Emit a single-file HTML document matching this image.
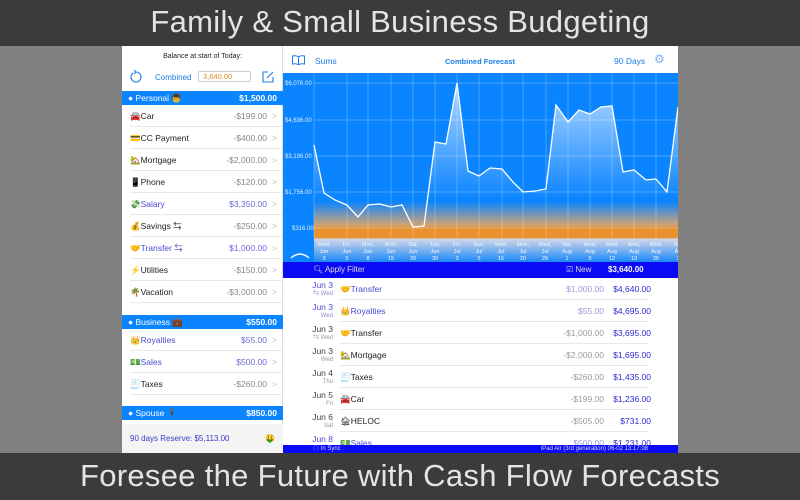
<!DOCTYPE html>
<html><head><meta charset="utf-8"><style>
*{margin:0;padding:0;box-sizing:border-box}
body{width:800px;height:500px;overflow:hidden;background:#808080;font-family:"Liberation Sans","Noto Sans CJK JP",sans-serif;position:relative}
.bar{position:absolute;left:0;width:800px;background:#3b3b3b;color:#e4e4e4;text-align:center;font-weight:300;font-size:31px;letter-spacing:0.3px}
#top{top:0;height:46px;line-height:44px}
#bot{top:453px;height:47px;line-height:46px}
#screen{position:absolute;left:122px;top:46px;width:556px;height:407px;background:#fff;overflow:hidden}
#left{position:absolute;left:0;top:0;width:161px;height:407px;background:#fff;border-right:1px solid #ddd}
.hd{font-size:7px;color:#222;text-align:center;position:absolute;top:7px;width:161px}
.sec{position:absolute;left:0;width:161px;height:14px;background:#0a84ff;color:#fff;font-size:8.5px;line-height:14px;padding:0 6px}
.sec b{float:right;font-weight:bold}
.row{position:absolute;left:8px;width:153px;height:22px;border-bottom:1px solid #e8e8e8;font-size:8.5px;line-height:22px;color:#222}
.row .v{position:absolute;right:16px;color:#888}
.row .c{position:absolute;right:6px;color:#bbb}
.row.p{color:#4a4ad6}.row.p .v{color:#6a6ad6}
#right{position:absolute;left:161px;top:0;width:395px;height:407px}
.tx{position:absolute;left:18px;width:377px;height:22px;font-size:8.5px}
.tx .d{position:absolute;left:6px;top:3px;width:26px;text-align:right;color:#444;line-height:9px}
.tx .d small{display:block;font-size:6px;color:#999}
.tx .n{position:absolute;left:39px;top:0;line-height:22px;color:#222;width:308px;border-bottom:1px solid #e8e8e8;height:22px}
.tx .bb{position:absolute;left:300px;line-height:22px;color:#2b2bd0;top:0;width:50px;text-align:right}
.tx .am{left:253px;color:#999}
.pp .d,.pp .n{color:#4a4ad6}.pp .d small{color:#8a8ad6}.pp .am{color:#9a9ae0}
</style></head><body>
<div class="bar" id="top">Family &amp; Small Business Budgeting</div>
<div class="bar" id="bot">Foresee the Future with Cash Flow Forecasts</div>
<div id="screen">
<div id="left">
<div class="hd">Balance at start of Today:</div>
<svg style="position:absolute;left:8px;top:24px" width="12" height="13" viewBox="0 0 12 13"><path d="M3 3 A5 5 0 1 0 6 2 L4 0 M6 2 L4 4" fill="none" stroke="#1a7de8" stroke-width="1.1"/></svg>
<div style="position:absolute;left:33px;top:27px;font-size:8px;color:#1a7de8">Combined</div>
<div style="position:absolute;left:76px;top:25px;width:53px;height:11px;border:1px solid #ccc;border-radius:2px;font-size:7.5px;color:#e08a2a;line-height:10px;padding-left:4px">3,640.00</div>
<svg style="position:absolute;left:140px;top:25px" width="12" height="12" viewBox="0 0 12 12"><path d="M6 1H1v10h10V6M5 7l6-6" fill="none" stroke="#1a7de8" stroke-width="1.1"/></svg>
<div class="sec" style="top:45px">● Personal 👦<b>$1,500.00</b></div>
<div class="row" style="top:59px">🚘Car<span class="v">-$199.00</span><span class="c">&gt;</span></div>
<div class="row" style="top:81px">💳CC Payment<span class="v">-$400.00</span><span class="c">&gt;</span></div>
<div class="row" style="top:103px">🏡Mortgage<span class="v">-$2,000.00</span><span class="c">&gt;</span></div>
<div class="row" style="top:125px">📱Phone<span class="v">-$120.00</span><span class="c">&gt;</span></div>
<div class="row p" style="top:147px">💸Salary<span class="v">$3,350.00</span><span class="c">&gt;</span></div>
<div class="row" style="top:169px">💰Savings ⇆<span class="v">-$250.00</span><span class="c">&gt;</span></div>
<div class="row p" style="top:191px">🤝Transfer ⇆<span class="v">$1,000.00</span><span class="c">&gt;</span></div>
<div class="row" style="top:213px">⚡Utilities<span class="v">-$150.00</span><span class="c">&gt;</span></div>
<div class="row" style="top:235px">🌴Vacation<span class="v">-$3,000.00</span><span class="c">&gt;</span></div>
<div class="sec" style="top:269px">● Business 💼<b>$550.00</b></div>
<div class="row p" style="top:283px">👑Royalties<span class="v">$55.00</span><span class="c">&gt;</span></div>
<div class="row p" style="top:305px">💵Sales<span class="v">$500.00</span><span class="c">&gt;</span></div>
<div class="row" style="top:327px">🧾Taxes<span class="v">-$260.00</span><span class="c">&gt;</span></div>
<div class="sec" style="top:360px">● Spouse 🕴<b>$850.00</b></div>
<div style="position:absolute;top:378px;left:0;width:161px;height:29px;background:#f4f4f4;font-size:8px;color:#3a3acc;line-height:30px;padding-left:8px">90 days Reserve: $5,113.00<span style="position:absolute;right:8px">🤑</span></div>
</div>
<div id="right">
<svg style="position:absolute;left:9px;top:9px" width="13" height="10" viewBox="0 0 13 10"><path d="M6.5 2C5 0.5 2 0.5 0.5 1v8c1.5-.5 4.5-.5 6 1 1.5-1.5 4.5-1.5 6-1V1C11 .5 8 .5 6.5 2v8" fill="none" stroke="#1a7de8" stroke-width="1"/></svg>
<div style="position:absolute;left:32px;top:10px;font-size:8.5px;color:#1a7de8">Sums</div>
<div style="position:absolute;left:162px;top:11px;font-size:7.5px;color:#1a7de8;font-weight:bold">Combined Forecast</div>
<div style="position:absolute;left:331px;top:10px;font-size:8.5px;color:#1a7de8">90 Days</div>
<div style="position:absolute;left:371px;top:6px;font-size:12px;color:#7ab0f0">⚙</div>
<svg style="position:absolute;left:0;top:27px" width="395" height="189" viewBox="161 27 395 189">
<defs>
<linearGradient id="bg" x1="0" y1="27" x2="0" y2="216" gradientUnits="userSpaceOnUse">
<stop offset="0" stop-color="#0a84ff"/><stop offset="0.68" stop-color="#0a84ff"/><stop offset="0.8" stop-color="#c9a27a"/><stop offset="0.825" stop-color="#e8912e"/><stop offset="0.87" stop-color="#e8912e"/><stop offset="0.88" stop-color="#cfd6e8"/><stop offset="1" stop-color="#1a88f8"/></linearGradient>
<linearGradient id="fl" x1="0" y1="37" x2="0" y2="200" gradientUnits="userSpaceOnUse"><stop offset="0" stop-color="#fff" stop-opacity="0.95"/><stop offset="1" stop-color="#fff" stop-opacity="0"/></linearGradient>
</defs>
<rect x="161" y="27" width="395" height="189" fill="#0a84ff"/>
<rect x="192" y="27" width="364" height="189" fill="url(#bg)"/>
<g stroke="#fff" stroke-opacity="0.35" stroke-width="0.7">
<line x1="192" y1="37" x2="556" y2="37"/><line x1="192" y1="74" x2="556" y2="74"/><line x1="192" y1="110" x2="556" y2="110"/><line x1="192" y1="146" x2="556" y2="146"/><line x1="192" y1="182" x2="556" y2="182"/>
<path d="M192 27V192M225 27V192M246 27V192M269 27V192M291 27V192M313 27V192M335 27V192M357 27V192M380 27V192M401 27V192M424 27V192M446 27V192M468 27V192M490 27V192M512 27V192M534 27V192"/>
</g>
<path transform="translate(-122,-46)" d="M314 145L324 193 335 200 347 205 358 217 368 205 380 204 391 207 402 205 413 227 424 226 435 142 446 144 457 83 468 171 479 176 490 168 502 169 513 182 523 192 535 191 546 189 556 105 568 122 579 110 590 114 601 107 612 106 623 172 634 170 646 180 656 179 667 192 678 107V238H314Z" fill="url(#fl)"/>
<path transform="translate(-122,-46)" d="M314 145L324 193 335 200 347 205 358 217 368 205 380 204 391 207 402 205 413 227 424 226 435 142 446 144 457 83 468 171 479 176 490 168 502 169 513 182 523 192 535 191 546 189 556 105 568 122 579 110 590 114 601 107 612 106 623 172 634 170 646 180 656 179 667 192 678 107" fill="none" stroke="#fff" stroke-width="1.3"/>
<g fill="#dfeeff" font-size="6" font-family="Liberation Sans">
<text x="163" y="39">$6,076.00</text><text x="163" y="76">$4,636.00</text><text x="163" y="112">$3,196.00</text><text x="163" y="148">$1,756.00</text><text x="170" y="184">$316.00</text>
</g>
<g fill="#f4f8ff" font-size="5.5" font-family="Liberation Sans" text-anchor="middle">
<text x="202" y="200">Wed,</text><text x="202" y="207">Jun</text><text x="202" y="214">3</text>
<text x="225" y="200">Fri,</text><text x="225" y="207">Jun</text><text x="225" y="214">5</text>
<text x="246" y="200">Mon,</text><text x="246" y="207">Jun</text><text x="246" y="214">8</text>
<text x="269" y="200">Mon,</text><text x="269" y="207">Jun</text><text x="269" y="214">15</text>
<text x="291" y="200">Sat,</text><text x="291" y="207">Jun</text><text x="291" y="214">20</text>
<text x="313" y="200">Tue,</text><text x="313" y="207">Jun</text><text x="313" y="214">30</text>
<text x="335" y="200">Fri,</text><text x="335" y="207">Jul</text><text x="335" y="214">3</text>
<text x="357" y="200">Sun,</text><text x="357" y="207">Jul</text><text x="357" y="214">5</text>
<text x="379" y="200">Wed,</text><text x="379" y="207">Jul</text><text x="379" y="214">15</text>
<text x="401" y="200">Mon,</text><text x="401" y="207">Jul</text><text x="401" y="214">20</text>
<text x="423" y="200">Wed,</text><text x="423" y="207">Jul</text><text x="423" y="214">29</text>
<text x="445" y="200">Sat,</text><text x="445" y="207">Aug</text><text x="445" y="214">1</text>
<text x="468" y="200">Wed,</text><text x="468" y="207">Aug</text><text x="468" y="214">5</text>
<text x="490" y="200">Wed,</text><text x="490" y="207">Aug</text><text x="490" y="214">12</text>
<text x="512" y="200">Wed,</text><text x="512" y="207">Aug</text><text x="512" y="214">19</text>
<text x="534" y="200">Wed,</text><text x="534" y="207">Aug</text><text x="534" y="214">26</text>
<text x="556" y="200">Mo</text><text x="556" y="207">Au</text><text x="556" y="214">3</text>
</g>
<path d="M169 212Q178 204 187 212" fill="none" stroke="#fff" stroke-width="1.5"/>
</svg>
<div style="position:absolute;left:0;top:216px;width:395px;height:16px;background:#0a0af5;color:#fff;font-size:8px;line-height:16px">
<span style="position:absolute;left:30px;color:#dde">🔍︎ Apply Filter</span>
<span style="position:absolute;left:283px;color:#dde">☑ New</span>
<span style="position:absolute;left:325px;font-weight:bold">$3,640.00</span></div>
<div class="tx pp" style="top:232px"><div class="d">Jun 3<small>⇆ Wed</small></div><div class="n">🤝Transfer</div><span class="bb am">$1,000.00</span><span class="bb">$4,640.00</span></div>
<div class="tx pp" style="top:254px"><div class="d">Jun 3<small>Wed</small></div><div class="n">👑Royalties</div><span class="bb am">$55.00</span><span class="bb">$4,695.00</span></div>
<div class="tx" style="top:276px"><div class="d">Jun 3<small>⇆ Wed</small></div><div class="n">🤝Transfer</div><span class="bb am">-$1,000.00</span><span class="bb">$3,695.00</span></div>
<div class="tx" style="top:298px"><div class="d">Jun 3<small>Wed</small></div><div class="n">🏡Mortgage</div><span class="bb am">-$2,000.00</span><span class="bb">$1,695.00</span></div>
<div class="tx" style="top:320px"><div class="d">Jun 4<small>Thu</small></div><div class="n">🧾Taxes</div><span class="bb am">-$260.00</span><span class="bb">$1,435.00</span></div>
<div class="tx" style="top:342px"><div class="d">Jun 5<small>Fri</small></div><div class="n">🚘Car</div><span class="bb am">-$199.00</span><span class="bb">$1,236.00</span></div>
<div class="tx" style="top:364px"><div class="d">Jun 6<small>Sat</small></div><div class="n">🏚HELOC</div><span class="bb am">-$505.00</span><span class="bb">$731.00</span></div>
<div class="tx pp" style="top:386px"><div class="d">Jun 8<small>Mon</small></div><div class="n">💵Sales</div><span class="bb am">$500.00</span><span class="bb">$1,231.00</span></div>
<div style="position:absolute;left:0;top:399px;width:395px;height:8px;background:#0a0af5;color:#dde;font-size:6px;line-height:8px">
<span style="position:absolute;left:30px">☁ In Sync</span><span style="position:absolute;right:30px">iPad Air (3rd generation) 06-02 13:17:08</span></div>
</div>
</div>
</body></html>
